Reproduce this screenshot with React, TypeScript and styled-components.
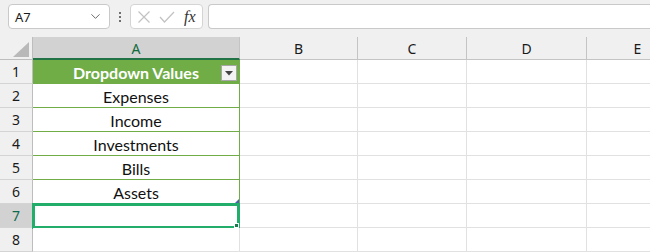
import React from "react";
import styled, { createGlobalStyle } from "styled-components";
import { ChevronDown } from "lucide-react";

const GlobalStyle = createGlobalStyle`
* {
    box-sizing: border-box;
    margin: 0;
    padding: 0;
}
body {
    background: #f0f0f0;
    font-family: "Noto Sans", "Open Sans", sans-serif;
    overflow: hidden;
}
`

const Page = styled.div`
    width: 650px;
    height: 252px;
    overflow: hidden;
    display: flex;
    flex-direction: column;
`

const Toolbar = styled.div`
    height: 37px;
    display: flex;
    align-items: flex-start;
    padding: 4px 0 0 8px;
    background: #f0f0f0;
`

const NameBox = styled.div`
    width: 102px;
    height: 25px;
    background: #fff;
    border: 1px solid #c9c9c9;
    border-radius: 4px;
    display: flex;
    align-items: center;
    justify-content: space-between;
    padding: 0 6px 0 6px;
    font-family: "Noto Sans", sans-serif;
    font-size: 13px;
    color: #1a1a1a;
    svg {
        color: #555;
    }
`

const Dots = styled.div`
    width: 20px;
    height: 25px;
    display: flex;
    flex-direction: column;
    align-items: center;
    justify-content: center;
    gap: 2px;
    span {
        width: 2px;
        height: 2px;
        background: #444;
        border-radius: 1px;
    }
`

const FxBox = styled.div`
    width: 73px;
    height: 25px;
    background: #fff;
    border: 1px solid #d4d4d4;
    border-radius: 4px;
    display: flex;
    align-items: center;
    padding-left: 6px;
    gap: 8px;
`

const Fx = styled.span`
    font-family: "Liberation Serif", "DejaVu Serif", serif;
    font-style: italic;
    font-size: 16px;
    color: #333;
    margin-left: 1px;
`

const Formula = styled.div`
    flex: 1;
    height: 25px;
    margin-left: 5px;
    background: #fff;
    border: 1px solid #c9c9c9;
    border-right: none;
    border-radius: 4px 0 0 4px;
`

const Sheet = styled.div`
    display: grid;
    grid-template-columns: 33px 207px 118px 109px 120px 102px;
    grid-template-rows: 23px repeat(8, 24px);
    background: #fff;
`

const Corner = styled.div`
    background: #f0f0f0;
    border-right: 1px solid #bdbdbd;
    border-bottom: 1px solid #bdbdbd;
    position: relative;
    svg {
        position: absolute;
        right: 3px;
        bottom: 2px;
    }
`

const ColHead = styled.div<{ $sel?: boolean }>`
    background: ${p => p.$sel ? "#d2d2d2" : "#f0f0f0"};
    border-right: 1px solid #c4c4c4;
    border-bottom: ${p => p.$sel ? "2px solid #217346" : "1px solid #c4c4c4"};
    display: flex;
    align-items: center;
    justify-content: center;
    font-family: "Noto Sans", sans-serif;
    font-size: 14px;
    color: ${p => p.$sel ? "#0f6b3b" : "#1a1a1a"};
    padding-top: 1px;
`

const RowHead = styled.div<{ $sel?: boolean }>`
    background: ${p => p.$sel ? "#d2d2d2" : "#f0f0f0"};
    border-right: 1px solid #bdbdbd;
    border-bottom: 1px solid #d4d4d4;
    display: flex;
    align-items: center;
    justify-content: center;
    font-family: "Noto Sans", sans-serif;
    font-size: 14px;
    color: ${p => p.$sel ? "#0f6b4f" : "#1a1a1a"};
`

const Cell = styled.div<{ $table?: boolean; $head?: boolean }>`
    position: relative;
    background: ${p => p.$head ? "#70ad47" : "#fff"};
    border-right: 1px solid ${p => p.$table ? "#70ad47" : "#e1e1e1"};
    border-bottom: 1px solid ${p => p.$table ? "#70ad47" : "#e1e1e1"};
    display: flex;
    align-items: center;
    justify-content: center;
    font-family: Lato, "Liberation Sans", sans-serif;
    font-size: 16px;
    font-weight: ${p => p.$head ? 700 : 400};
    color: ${p => p.$head ? "#fff" : "#111"};
    padding-top: 1px;
`

const FilterButton = styled.div`
    position: absolute;
    right: 2px;
    top: 5px;
    width: 16px;
    height: 16px;
    background: #f3f3f3;
    border: 1px solid #a6a6a6;
    display: flex;
    align-items: center;
    justify-content: center;
`

const ResizeHandle = styled.div`
    position: absolute;
    right: 0;
    bottom: 0;
    width: 0;
    height: 0;
    border-left: 4px solid transparent;
    border-bottom: 4px solid #4a5fb4;
`

const Selection = styled.div`
    position: absolute;
    left: -1px;
    top: -1px;
    width: 208px;
    height: 26px;
    border: 3px solid #23ad6a;
    pointer-events: none;
`

const FillHandle = styled.div`
    position: absolute;
    right: -2px;
    bottom: -2px;
    width: 5px;
    height: 5px;
    background: #1a7a4a;
    border: 1px solid #fff;
`

const columns = ["A", "B", "C", "D", "E"];
const values = ["Dropdown Values", "Expenses", "Income", "Investments", "Bills", "Assets", "", ""];

export default function App() {
    return (
        <Page>
            <GlobalStyle />
            <Toolbar>
                <NameBox>
                    <span>A7</span>
                    <ChevronDown size={15} strokeWidth={1.4} />
                </NameBox>
                <Dots><span /><span /><span /></Dots>
                <FxBox>
                    <svg width="14" height="14" viewBox="0 0 14 14">
                        <path d="M1.5 1.5 L12.5 12.5 M12.5 1.5 L1.5 12.5" stroke="#c2c2c2" strokeWidth="1.2" fill="none" />
                    </svg>
                    <svg width="16" height="14" viewBox="0 0 16 14">
                        <path d="M1 7 L5.5 12 L15 2" stroke="#c2c2c2" strokeWidth="1.2" fill="none" />
                    </svg>
                    <Fx>fx</Fx>
                </FxBox>
                <Formula />
            </Toolbar>
            <Sheet>
                <Corner>
                    <svg width="16" height="15" viewBox="0 0 16 15">
                        <path d="M16 0 L16 15 L0 15 Z" fill="#b9b9b9" />
                    </svg>
                </Corner>
                {columns.map(c => (
                    <ColHead key={c} $sel={c === "A"}>{c}</ColHead>
                ))}
                {values.map((v, i) => (
                    <React.Fragment key={i}>
                        <RowHead $sel={i === 6}>{i + 1}</RowHead>
                        <Cell $table={i < 6} $head={i === 0}>
                            {v}
                            {i === 0 && (
                                <FilterButton>
                                    <svg width="8" height="5" viewBox="0 0 8 5">
                                        <path d="M0 0 L8 0 L4 4.5 Z" fill="#444" />
                                    </svg>
                                </FilterButton>
                            )}
                            {i === 5 && <ResizeHandle />}
                            {i === 6 && (
                                <Selection>
                                    <FillHandle />
                                </Selection>
                            )}
                        </Cell>
                        <Cell />
                        <Cell />
                        <Cell />
                        <Cell />
                    </React.Fragment>
                ))}
            </Sheet>
        </Page>
    );
}
